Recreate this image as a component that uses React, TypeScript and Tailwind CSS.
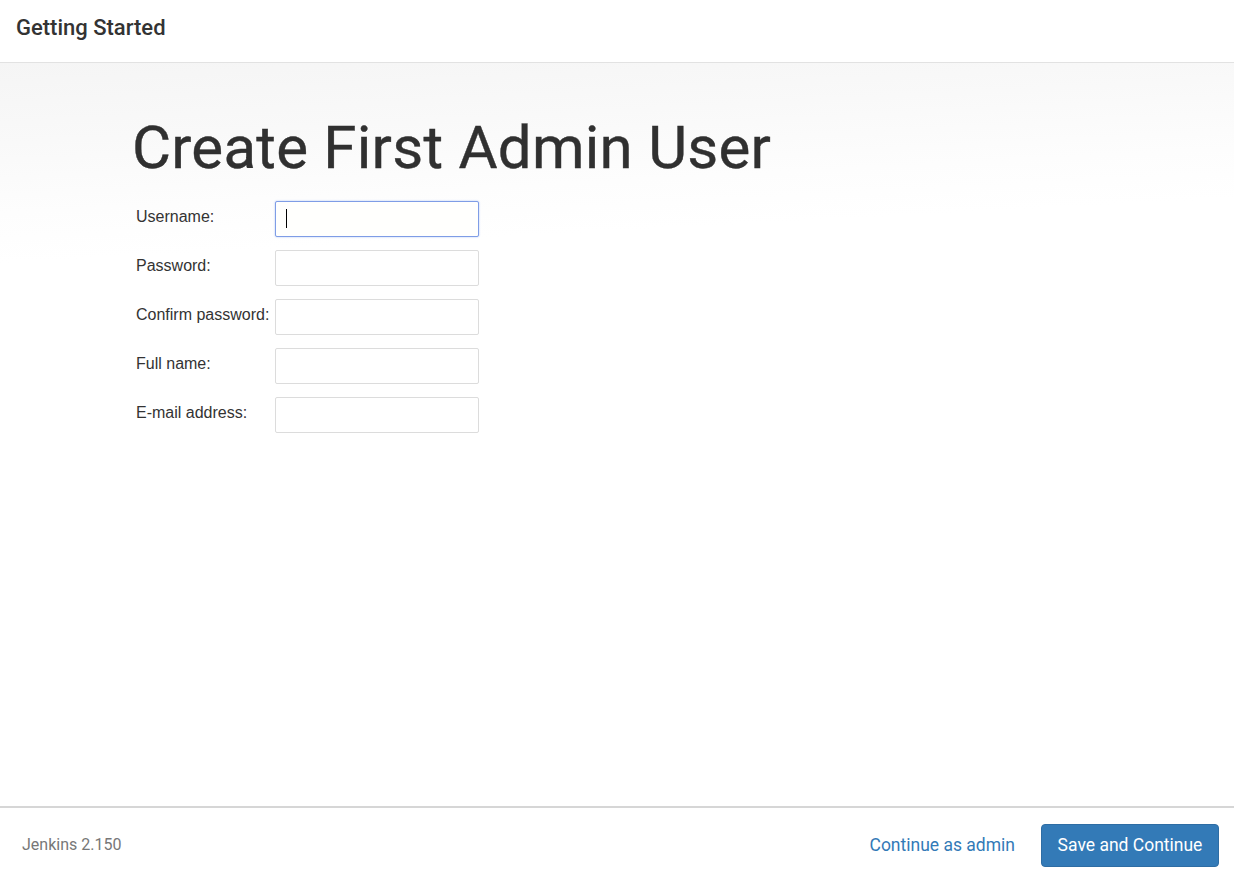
import React from "react";

const fields = ["Username:", "Password:", "Confirm password:", "Full name:", "E-mail address:"];

export default function App() {
  return (
    <div className="h-screen w-full flex flex-col bg-white font-['Roboto',sans-serif] text-[#333]">
      <header className="h-[63px] shrink-0 flex items-center px-[16px] border-b border-[#e2e2e2] bg-white">
        <h1 className="text-[22px] font-medium text-[#333] -mt-[7px]">Getting Started</h1>
      </header>

      <main className="flex-1 bg-[linear-gradient(177deg,#f5f5f5_0px,#f9f9f9_80px,#fdfdfd_150px,#ffffff_200px)]">
        <div className="pl-[132px] pt-[52px]">
          <h2 className="text-[60px] leading-[66px] font-normal text-[#303030] tracking-[0.25px] [-webkit-text-stroke:0.4px_#303030]">Create First Admin User</h2>
          <div className="mt-[20px] flex flex-col gap-[13px] pl-[4px]">
            {fields.map((label, i) => (
              <div key={label} className="flex items-start">
                <label className="w-[139px] pt-[6px] text-[16px] leading-[20px] text-[#333] font-['Liberation_Sans',Arial,sans-serif] whitespace-nowrap">
                  {label}
                </label>
                <div className="relative">
                  <input
                    type={label.toLowerCase().includes("password") ? "password" : "text"}
                    className={
                      i === 0
                        ? "block w-[204px] h-[36px] rounded-[2px] border border-[#7f9de6] bg-[#fffffd] shadow-[0_0_2px_#a9c0f2] outline-none"
                        : "block w-[204px] h-[36px] rounded-[2px] border border-[#dcdcdc] bg-white outline-none"
                    }
                  />
                  {i === 0 && <span className="absolute left-[11px] top-[8px] w-[1px] h-[19px] bg-black" />}
                </div>
              </div>
            ))}
          </div>
        </div>
      </main>

      <footer className="h-[76px] shrink-0 border-t-2 border-[#d6d6d6] flex items-center justify-between pl-[22px] pr-[15px] bg-white">
        <span className="text-[16px] text-[#777]">Jenkins 2.150</span>
        <div className="flex items-center gap-[26px]">
          <a className="text-[17.5px] text-[#337ab7] cursor-pointer">Continue as admin</a>
          <button className="h-[43px] w-[178px] rounded-[4px] bg-[#337ab7] border border-[#2e6da4] text-white text-[17.5px]">
            Save and Continue
          </button>
        </div>
      </footer>
    </div>
  );
}
